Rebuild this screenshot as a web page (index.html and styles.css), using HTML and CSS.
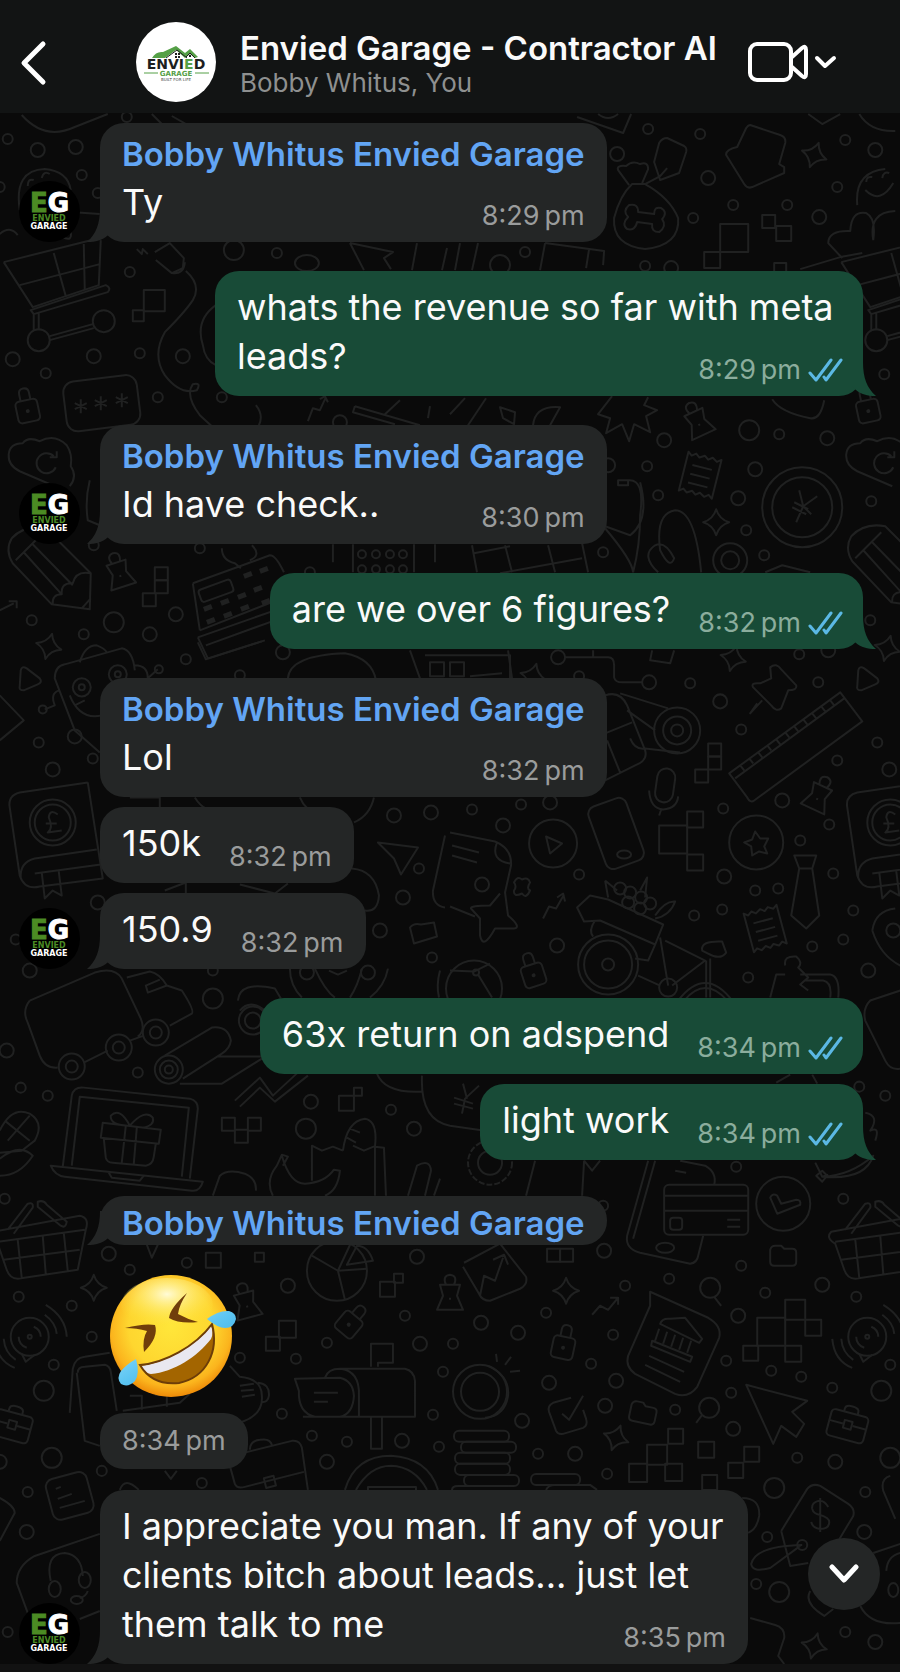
FILE: index.html
```html
<!DOCTYPE html>
<html lang="en">
<head>
    <meta charset="utf-8">
    <meta name="viewport" content="width=device-width, initial-scale=1">
    <title>Envied Garage - Contractor AI</title>
    <link rel="stylesheet" href="styles.css">
</head>
<body>

<!-- shared icons -->
<svg class="sprite" aria-hidden="true">
    <symbol id="eg" viewBox="0 0 61 61">
        <circle cx="30.500" cy="30.500" r="30.500" fill="#000"/>
        <text x="11" y="31" class="eg-big"><tspan fill="#4b8b24" stroke="#4b8b24">E</tspan><tspan fill="#fff" stroke="#fff">G</tspan></text>
        <text x="30" y="40" class="eg-small" fill="#4b8b24">ENVIED</text>
        <text x="30" y="48" class="eg-small" fill="#fff">GARAGE</text>
    </symbol>
    <symbol id="ticks" viewBox="0 0 36 24">
        <path d="M2 15 L8 22 L23 2 M16 19 L18 22 L33 2" fill="none" stroke="#5bb8e4" stroke-width="3" stroke-linecap="round" stroke-linejoin="round"/>
    </symbol>
    <symbol id="spark" viewBox="-14 -14 28 28" overflow="visible">
        <path d="M0 -13 Q3 -3 13 0 Q3 3 0 13 Q-3 3 -13 0 Q-3 -3 0 -13 Z"/>
    </symbol>
    <symbol id="lock" viewBox="-14 -20 28 40" overflow="visible">
        <rect x="-11" y="-6" width="22" height="22" rx="4"/>
        <path d="M-5 -6 V-13 Q-5 -18 0 -18 Q5 -18 5 -13 V-6"/><circle r="1" cy="5"/>
    </symbol>
    <symbol id="pin" viewBox="-16 -20 32 40" overflow="visible">
        <path d="M-4 -9 Q-8 -18 0 -19 Q8 -18 4 -9 M-10 -9 H10 L7 2 L13 16 H-13 L-7 2 Z M0 4 V6"/>
    </symbol>
    <symbol id="receipt" viewBox="-20 -24 40 48" overflow="visible">
        <path d="M-17 -20 l4 3 l4 -3 l4 3 l5 -3 l4 3 l4 -3 l5 3 l4 -3 V20 l-4 -3 l-4 3 l-5 -3 l-4 3 l-4 -3 l-5 3 l-4 -3 l-4 3 Z M-10 -8 H10 M-10 1 H10 M-10 10 H10"/>
    </symbol>
    <symbol id="cart" viewBox="0 0 120 120" overflow="visible">
        <path d="M4 22 L33 67 L99 45 L101 0 M4 22 L100 -2 M20 45 L100 24 M54 13 L66 56 M84 4 L85 50 M31 70 L106 45 Q112 48 108 52 L34 74 Z M34 73 V90 M39 72 V90 M50 96 L93 84 M50 100 L94 88"/>
        <circle cx="39" cy="100" r="11"/><circle cx="104" cy="81" r="11"/>
    </symbol>
    <symbol id="cloud" viewBox="0 0 80 60" overflow="visible">
        <path d="M55 52 L20 37 Q8 31 9 20 Q10 9 23 9 Q28 2 40 7 Q55 -1 67 11 Q73 20 71 32 Q78 42 70 52 M54 22 A10 10 0 1 0 56 33 M57 17 V23 H50"/>
    </symbol>
    <symbol id="pencil" viewBox="0 0 90 90" overflow="visible">
        <path d="M12 10 Q5 22 13 35 L52 76 L90 81 L91 45 L46 0 Q25 -4 12 10 M16 32 L42 6 M24 24 L62 66 M32 15 L73 57 M53 76 Q52 66 62 66 Q61 54 73 55 Q76 42 91 45 M82 80 L91 70"/>
    </symbol>
    <symbol id="book" viewBox="0 0 100 120" overflow="visible">
        <path d="M88 2 L20 12 Q8 15 10 27 L20 95 Q25 110 40 106 L103 98 L88 2 M97 69 L35 78 Q20 82 21 97 M35 93 L101 84 M42 92 L45 118 L53 110 L62 115 L59 91"/>
        <circle cx="53" cy="42" r="23"/><circle cx="53" cy="42" r="18"/>
        <path d="M58 34 Q50 28 49 37 Q54 48 48 52 L62 50 M46 43 H57"/>
    </symbol>
    <symbol id="basket" viewBox="0 0 110 80" overflow="visible">
        <path d="M4 30 L90 14 Q100 16 96 28 L88 68 L28 77 Q20 77 17 68 L8 42 Q-2 36 4 30 Z M8 40 L95 28 M14 58 L90 48 M28 38 L32 76 M53 34 L56 72 M74 31 L78 69 M18 28 L38 2 Q44 0 43 6 L24 32 M48 0 Q54 -2 57 3 L77 20 Q76 27 71 24 L48 5 Z"/>
    </symbol>
    <symbol id="wifi" viewBox="-40 -40 80 80" overflow="visible">
        <circle r="19"/><circle r="2"/>
        <path d="M-8 17 L-4 25 L5 18 M-11 0 A11 11 0 0 0 -3 11 M4 -10 A11 11 0 0 1 11 0 M16 -32 Q36 -20 37 0 M15 -22 Q26 -14 27 -3 M-26 2 Q-25 16 -14 23 M-35 2 Q-33 24 -15 31"/>
    </symbol>
    <symbol id="case" viewBox="-22 -20 44 40" overflow="visible">
        <rect x="-19" y="-10" width="38" height="27" rx="4"/>
        <path d="M-7 -10 V-13 Q-7 -17 0 -17 Q7 -17 7 -13 V-10 M-19 2 H-5 M5 2 H19"/><rect x="-4" y="-2" width="8" height="8"/>
    </symbol>
    <symbol id="folder" viewBox="-14 -12 28 24" overflow="visible">
        <path d="M-13 -6 Q-12 -10 -8 -10 H-2 L1 -7 H9 Q13 -7 13 -3 V6 Q13 10 9 10 H-9 Q-13 10 -13 6 Z"/>
    </symbol>
</svg>

<main class="phone">

    <header class="top">
        <button class="back" type="button" aria-label="Back">
            <svg width="28" height="46" viewBox="0 0 28 46"><path d="M23 4 L4 23 L23 42" fill="none" stroke="#fff" stroke-width="5" stroke-linecap="round" stroke-linejoin="round"/></svg>
        </button>
        <svg class="group-pic" viewBox="0 0 81 81" role="img" aria-label="Envied Garage logo">
            <circle cx="40" cy="40" r="40" fill="#fff"/>
            <path d="M16 36 Q20 29 27 30 L40 24 L49 31 L54 27 L62 35 L59 36 L54 32 L49 36 L40 28 L29 36 Z" fill="#55a047"/>
            <path d="M30 36 L41 28 L51 36 M50 35 L54 31 L59 36" fill="none" stroke="#1d1f1e" stroke-width="1"/>
            <path d="M39 31 h2 v2 h-2 z M42 31 h2 v2 h-2 z M39 34 h2 v2 h-2 z M42 34 h2 v2 h-2 z M53 33 h2 v2 h-2 z" fill="#1d1f1e"/>
            <text x="40" y="47" class="logo-name">ENVI<tspan fill="#55a047">E</tspan>D</text>
            <path d="M8 51 H22 M59 51 H73" stroke="#55a047"/>
            <text x="40" y="54" class="logo-sub">GARAGE</text>
            <text x="40" y="59" class="logo-tag">BUILT FOR LIFE</text>
        </svg>
        <div class="group">
            <h1>Envied Garage - Contractor AI</h1>
            <p>Bobby Whitus, You</p>
        </div>
        <button class="call" type="button" aria-label="Video call">
            <svg width="90" height="42" viewBox="0 0 90 42" fill="none" stroke="#fff" stroke-linejoin="round" stroke-linecap="round">
                <rect x="2" y="2" width="41" height="36" rx="7" stroke-width="4"/>
                <path d="M44 15 L54 6 Q58 3 58 8 V32 Q58 37 54 34 L44 25" stroke-width="4"/>
                <path d="M69 16 L77 24 L86 16" stroke-width="4"/>
            </svg>
        </button>
    </header>

    <section class="chat">
        <svg class="wallpaper" viewBox="0 113 900 1550" preserveAspectRatio="xMidYMin slice" aria-hidden="true">
            <g id="dots"></g>
            <g id="squares"></g>
            <g id="shapes"></g>
            <path d="M22 115 Q45 141 75 127 L108 114 M152 114 L166 128 M172 116 L188 125 M20 210 Q14 170 45 169 Q68 171 71 190 M28 186 q0 -8 6 -6 M42 178 q2 -8 8 -4 M71 212 L100 214 M60 235 Q75 245 70 228 M0 234 Q10 225 18 235"/>
            <path d="M577 117 L623 133 L631 114 M598 114 Q608 122 618 114 M808 114 L822 124 L840 114 M859 114 Q870 132 895 131"/>
            <path d="M750 125 L780 135 Q786 137 785 143 L779 164 L784 167 V173 L752 187 Q747 189 744 184 L726 155 Q725 150 737 147 L746 128 Q748 125 750 125 Z"/>
            <path d="M667 138 L684 146 Q687 148 686 152 L679 173 L660 180 L654 162 L659 143 Q662 138 667 138 Z M645 184 L660 176 L667 168"/>
            <path d="M645 184 Q670 198 678 218 Q680 245 645 249 Q612 245 614 218 Q620 195 632 184 Z M629 185 L618 170 Q616 165 626 166 Q632 160 640 164 Q648 161 648 169 L642 183"/>
            <path d="M638 212 L654 214 Q654 206 661 208 Q668 212 662 219 Q667 226 659 232 Q651 232 652 224 L637 222 Q635 231 627 229 Q621 224 628 217 Q622 211 629 205 Q638 203 638 212 Z"/>
            <path d="M857 205 Q854 172 885 169 M865 190 Q880 205 893 183 M866 182 q0 -6 6 -5 M882 178 q1 -7 7 -5 M842 258 L828 243 Q828 230 850 231 Q851 210 866 213 Q876 218 873 240 M873 240 Q868 212 895 211"/>
            <path d="M800 269 L840 257 L862 253"/>
            <path d="M155 252 L170 243 L184 258 L183 268 L172 273 L156 260 M172 273 Q184 275 185 262 M137 249 l5 5 l1 -5 l5 5 M186 271 Q202 285 193 300 Q185 312 165 332 Q152 355 165 375 Q180 395 197 390 Q202 382 193 384 Q185 395 200 415 L212 426"/>
            <path d="M350 243 L393 252 L384 258 L391 269 M350 243 L364 270 M417 243 L412 270 M447 248 L442 270 M460 243 L455 270 M478 243 L472 270 M545 243 L540 270 M545 243 L604 251 L603 265 M589 249 L586 268 M216 305 Q195 320 203 345 Q205 360 216 365"/>
            <ellipse cx="307" cy="263" rx="12" ry="8"/>
            <rect x="65" y="378" width="74" height="50" rx="11" transform="rotate(-7 102 403)"/>
            <path d="M81 399 V413 M75 403 L87 409 M75 409 L87 403 M101 396 V410 M95 400 L107 406 M95 406 L107 400 M122 393 V407 M116 397 L128 403 M116 403 L128 397"/>
            <path d="M308 421 L313 408 L320 410 L326 397 M320 399 L325 396 L328 402 M355 406 L420 425 M355 406 L353 412 L395 424 M400 400 L385 414 M430 406 L428 418 M256 405 Q264 415 259 425 M90 480 Q85 500 88 520 L100 525"/>
            <path d="M612 396 L598 414 L610 418 L606 433 L622 424 L629 441 L634 424 L650 432 L646 416 L657 410 L644 405 L648 397 M533 425 Q535 405 560 407 L550 425 M500 407 L515 412 L514 424 L503 418 Z M465 398 L450 414 M486 398 L468 425"/>
            <circle cx="802" cy="507" r="40"/><circle cx="802" cy="507" r="30"/>
            <path d="M799 490 L803 506 L796 522 M817 496 L803 506 L811 514 M794 502 L808 509 M792 507 L806 514 M772 399 Q780 412 810 418 Q820 420 824 400"/>
            <path d="M640 482 Q650 520 630 535 L605 526 M605 528 Q632 560 633 572 M628 480 Q645 478 640 515 Q640 545 633 572 M618 480 h10 v5 h-10 z"/>
            <path d="M658 572 Q640 555 655 545 Q665 540 674 558 Q670 570 660 550 Q655 513 675 510 Q695 510 701 572 M765 572 L782 565 L810 572"/>
            <circle cx="730" cy="560" r="17"/><circle cx="730" cy="560" r="9"/>
            <path d="M472 545 L477 572 M505 545 L512 572 M548 545 L555 572 M582 543 L588 572 M474 553 L510 546 M500 573 L582 558"/>
            <path d="M222 548 Q222 560 235 563 L241 568 M252 545 Q262 555 250 560 M193 583 L270 555 Q276 555 284 572 M193 583 L200 630 M200 630 L282 598 M198 637 L275 610 M198 637 L208 658 M206 645 L275 620 M208 658 L265 640"/>
            <rect x="199" y="584" width="34" height="13" rx="3" transform="rotate(-20 216 590)"/>
            <path d="M244 576 l8 -3 M260 571 l8 -3 M204 609 l8 -3 M221 603 l8 -3 M238 597 l8 -3 M254 590 l8 -3 M207 622 l8 -3 M224 616 l8 -3 M241 609 l8 -3 M262 603 l8 -3" stroke-width="5"/>
            <path d="M333 544 V562 M353 544 V572 M414 544 V572 M435 544 V562 M0 610 L14 603 M9 601 h8 v7"/>
            <circle cx="362" cy="554" r="4"/><circle cx="376" cy="554" r="4"/><circle cx="390" cy="554" r="4"/><circle cx="403" cy="554" r="4"/>
            <circle cx="362" cy="569" r="4"/><circle cx="376" cy="569" r="4"/><circle cx="390" cy="569" r="4"/><circle cx="403" cy="569" r="4"/>
            <path d="M100 752 L75 730 L55 678 Q55 666 65 664 L122 648 Q133 650 135 670 M80 662 Q85 645 97 645 Q105 648 107 652 M135 665 Q148 665 148 678 L158 669 M45 709 L55 705 Q50 692 60 690 M70 695 Q80 720 102 715 M75 705 L85 700"/>
            <circle cx="82" cy="687" r="9"/><circle cx="82" cy="687" r="3"/><circle cx="118" cy="674" r="9"/><circle cx="118" cy="674" r="3"/><circle cx="159" cy="669" r="4"/><circle cx="43" cy="709" r="4"/>
            <path d="M21 670 Q22 665 27 668 L40 678 Q43 682 38 684 L24 690 Q19 690 20 686 Z M858 670 Q859 665 864 668 L877 678 Q880 682 875 684 L861 690 Q856 690 857 686 Z M0 695 L24 720 L0 740"/>
            <path d="M198 642 L206 659 L262 641 M288 678 Q290 655 345 653 Q372 658 376 680 M410 650 L420 678 M425 655 H510 V678"/>
            <rect x="430" y="662" width="14" height="14"/><rect x="450" y="662" width="14" height="14"/>
            <path d="M470 676 L502 673 M508 650 L512 678 M565 657 H608 Q614 657 614 665 V677 Q615 682 622 682 H642 M593 650 V656 M652 650 L650 660 L670 663 L674 650"/>
            <path d="M770 667 Q776 662 781 669 L796 685 Q797 690 788 690 L781 708 Q776 712 771 705 L753 687 Q750 682 760 683 L771 678 Z M762 700 L750 713 L757 703"/>
            <path d="M729 773 L840 692 L862 721 L754 800 Q750 803 747 797 Z M735 778 L844 698 M740 765 l4 5 M749 758 l4 5 M758 752 l4 5 M767 745 l4 5 M776 739 l4 5 M785 732 l4 5 M794 726 l4 5 M803 719 l4 5 M812 713 l4 5 M821 706 l4 5 M830 700 l4 5"/>
            <circle cx="677" cy="730" r="23"/><circle cx="677" cy="730" r="14"/><circle cx="677" cy="730" r="6"/>
            <path d="M605 695 Q620 690 627 705 L645 750 Q648 760 635 765 L605 780 M620 693 L668 708 M627 710 L655 730 M605 733 L632 722 M630 738 Q635 750 645 748 L680 752 M607 740 L620 772"/>
            <rect x="656" y="768" width="18" height="34" rx="9" transform="rotate(8 665 785)"/>
            <path d="M649 790 Q650 808 663 809 Q677 808 678 796 M661 809 L659 815"/>
            <rect x="596" y="800" width="40" height="66" rx="8" transform="rotate(-20 616 833)"/><ellipse cx="624" cy="854" rx="7" ry="4"/>
            <path d="M378 842 L418 847 L401 874 L394 858 Z M445 835 L433 890 Q432 905 445 907 M130 797 H160 V808 M195 797 Q200 805 206 808 M300 797 Q305 810 320 815 M374 797 Q370 815 354 822 M165 890 L186 882 V893 M240 884 L275 893 L288 883 M352 868 Q375 870 379 895 Q378 912 365 910"/>
            <circle cx="553" cy="843" r="24"/><path d="M546 836 L562 843 L550 853 Z"/>
            <path d="M450 832 L495 841 Q512 848 511 865 L505 892 L508 915 Q522 927 514 928 L495 928 Q483 950 480 935 L480 918 L471 908 Q470 905 490 905 L500 893 M497 842 Q490 860 510 863 M452 845 L479 852 M452 855 L477 862 M450 906 L475 916"/>
            <path d="M522 879 q6 -3 8 3 q-4 6 0 8 q-4 9 -8 3 q-9 4 -8 -3 q3 -4 0 -8 q3 -7 8 -3 Z M543 918 L549 906 L556 908 L564 894 M557 897 L563 893 L565 901 M410 927 Q414 922 421 924 L434 922 L437 936 L414 943 Z"/>
            <circle cx="756" cy="842" r="27"/><path d="M755 831 L760 838 L768 838 L764 846 L767 853 L759 851 L752 855 L751 846 L744 842 L752 839 Z"/>
            <path d="M794 855 H816 L812 868 H799 Z M799 868 L791 915 L806 928 L819 915 L812 868"/>
            <circle cx="608" cy="964" r="30"/><circle cx="608" cy="964" r="24"/><circle cx="608" cy="964" r="6"/>
            <path d="M577 907 L590 895 L608 899 L663 924 L655 944 L600 920 L584 921 Z M595 920 Q588 930 593 936 M605 880 L608 897 M605 880 L617 890 M640 890 L647 877 L645 897 M655 915 Q665 900 675 901 Q670 915 655 918 M655 944 L648 960 L635 958 M660 937 L668 985 M665 940 L705 960 L672 985 M706 960 V997 M710 958 V997 M638 975 L660 985 M702 950 Q700 940 722 941 L726 952 Q720 960 708 953 Z"/>
            <circle cx="620" cy="888" r="6"/><circle cx="630" cy="892" r="6"/><circle cx="641" cy="897" r="6"/><circle cx="628" cy="902" r="6"/><circle cx="650" cy="903" r="6"/><circle cx="640" cy="908" r="6"/><circle cx="668" cy="987" r="9"/>
            <path d="M678 1000 Q705 965 732 1000 M684 1000 Q705 975 727 1000 M770 997 L776 974 H785 M800 974 H830 Q840 976 838 997 M805 980 H823 Q832 982 830 997 M785 965 Q783 955 796 956 Q803 962 798 967 L808 977 L800 984 L808 990"/>
            <circle cx="474" cy="988" r="28"/><circle cx="476" cy="972" r="3"/><path d="M450 970 L474 971 L490 963 M478 974 L492 997"/>
            <path d="M872 930 Q875 910 895 908 M872 930 Q880 955 900 965 M900 990 L870 1000 Q862 1008 865 1020 L885 1060 Q890 1070 900 1068"/>
            <circle cx="893" cy="930" r="7"/>
            <path d="M30 1000 L95 972 Q115 966 122 978 L141 1018 Q146 1030 138 1036 M30 1000 Q22 1010 28 1022 L40 1055 Q45 1068 58 1067 M84 1062 L108 1050 M130 1040 L144 1035 M127 977 L150 971 Q160 973 167 985 L182 990 Q195 1010 192 1013 L170 1025 M167 985 L148 992 L146 985 L160 979"/>
            <circle cx="156" cy="1032" r="13"/><circle cx="156" cy="1032" r="6"/><circle cx="119" cy="1047" r="13"/><circle cx="119" cy="1047" r="6"/><circle cx="72" cy="1066" r="13"/><circle cx="72" cy="1066" r="6"/>
            <circle cx="169" cy="1069" r="14"/><circle cx="169" cy="1069" r="9"/><circle cx="169" cy="1069" r="4"/>
            <path d="M165 1055 L212 1027 Q228 1025 231 1040 Q230 1048 222 1053 L183 1078 M218 1056 H262 M180 1083 H222 L262 1058 M238 1000 Q240 980 275 988 L281 998 M240 1010 Q250 998 265 1010"/>
            <circle cx="253" cy="1020" r="14"/><circle cx="253" cy="1020" r="8"/>
            <path d="M290 968 Q290 985 302 997 M315 968 Q325 990 335 997 M362 968 Q358 985 350 997 M388 968 Q385 985 370 997 M329 970 L338 974 L347 970 M440 970 Q436 985 439 997"/><circle cx="307" cy="972" r="7"/><circle cx="368" cy="972" r="7"/>
            <path d="M235 1100 L260 1077 L273 1095 L300 1070 M240 1106 L260 1087 L275 1101 L308 1075 M377 1073 Q385 1093 422 1091 M422 1075 Q420 1120 450 1125 M463 1083 L467 1098 M479 1085 L465 1098 L462 1113 M454 1097 L473 1103 M454 1103 L473 1108 M450 1125 L485 1130"/>
            <path d="M63 1166 L72 1095 Q74 1086 84 1087 L190 1098 Q198 1100 198 1108 L190 1178 M72 1165 L80 1096 L189 1107 L182 1176 M51 1165 L203 1181 Q200 1191 192 1190 L65 1176 Q55 1175 51 1165 Z M109 1172 L112 1177 L140 1180 L144 1175"/>
            <path d="M103 1122 L161 1129 L159 1143 L101 1137 Z M104 1138 L106 1157 Q107 1162 113 1162 L146 1165 Q153 1164 154 1156 L156 1143 M126 1125 L122 1162 M137 1127 L134 1163 M130 1125 Q110 1125 111 1115 Q120 1106 130 1125 Q145 1108 153 1117 Q155 1125 143 1127"/>
            <path d="M0 1130 Q12 1105 30 1113 Q45 1122 35 1140 L22 1150 L0 1152 M5 1120 L30 1140 M30 1115 L8 1140 M0 1175 Q20 1175 33 1155 Q20 1142 0 1158"/>
            <path d="M213 1195 L220 1175 Q228 1168 245 1173 Q257 1178 256 1190 M282 1155 Q290 1183 305 1183 Q325 1182 334 1169 L340 1170 Q338 1190 325 1195 M277 1165 L282 1154 L288 1156 L283 1165 M277 1165 Q265 1180 273 1195 M312 1180 V1145 L322 1150 L333 1146 L343 1150 M343 1150 Q347 1120 365 1118 Q378 1120 375 1146 L384 1147 L386 1195 M375 1146 V1195 M353 1145 L364 1150 L376 1145 M350 1128 L360 1132 M347 1137 L356 1142 M408 1195 L417 1165 Q430 1158 431 1170 L425 1195 M434 1195 L440 1178"/>
            <circle cx="490" cy="1162" r="22" stroke-dasharray="6 2"/><circle cx="490" cy="1162" r="12"/>
            <path d="M535 1160 L526 1195 M584 1160 L582 1195 M584 1160 L592 1170 L600 1160 M648 1160 L627 1235 Q625 1248 640 1252 L690 1263 Q697 1262 698 1255 L703 1235 M655 1160 L633 1238 M680 1160 L705 1165 Q717 1172 714 1184 M675 1170 L686 1172"/>
            <rect x="664" y="1184" width="84" height="50" rx="5"/><path d="M664 1195 H748 M664 1210 H748 M727 1219 H740 M727 1226 H740"/><rect x="670" y="1217" width="12" height="12" rx="3"/><ellipse cx="665" cy="1247" rx="9" ry="5"/>
            <circle cx="783" cy="1203" r="27"/><path d="M770 1197 q2 -5 7 -2 l4 8 l15 -4 q5 0 4 5 l-23 9 Z"/>
            <path d="M815 1162 L822 1176 L828 1174 M822 1176 Q865 1180 873 1155 Q850 1175 822 1176 M816 1175 l6 6 l5 -6 l-5 -5 Z M865 1112 Q880 1115 870 1130 Q880 1125 875 1140 M776 1082 L790 1074 M812 1074 L817 1083"/>
            <circle cx="337" cy="1270" r="30"/><path d="M338 1270 L352 1240 M338 1270 L367 1268 M338 1270 L345 1299 M338 1270 L312 1255 M347 1264 L357 1245 Q368 1245 373 1260 Z M147 1244 L152 1257 L158 1244"/>
            <path d="M464 1262 L500 1243 L526 1276 Q528 1284 520 1288 L490 1300 Q482 1300 479 1293 L463 1266 M480 1295 L484 1275 L495 1280 L503 1257 M493 1259 L504 1254 L508 1264 M592 1314 L600 1305 L608 1309 L618 1297 M610 1297 H618 V1304"/>
            <path d="M650 1291 L708 1317 Q722 1325 719 1337 L697 1386 Q688 1398 675 1393 L635 1373 Q625 1366 628 1355 L650 1305 Z M660 1323 Q662 1317 670 1318 L685 1317 L702 1338 L699 1342 Z M652 1340 L692 1356 L690 1361 L651 1345 Z M659 1328 l-4 12 M667 1331 l-4 12 M675 1334 l-4 12 M683 1337 l-4 12 M691 1340 l-4 12 M649 1355 L684 1371 M645 1364 L680 1381"/>
            <circle cx="710" cy="1287" r="10"/><path d="M714 1296 L721 1305"/><circle cx="709" cy="1407" r="10"/><path d="M702 1414 L696 1422"/>
            <path d="M746 1384 L807 1400 L792 1411 L804 1423 L796 1436 L781 1425 L773 1443 Z"/>
            <circle cx="480" cy="1391" r="27"/><circle cx="480" cy="1391" r="19"/><path d="M488 1365 Q510 1375 508 1395 Q505 1415 485 1417 M496 1353 L497 1361 M511 1356 L505 1364 M510 1371 L520 1370"/>
            <path d="M571 1397 L553 1402 Q547 1405 549 1411 L556 1430 Q558 1434 563 1433 L583 1427 Q588 1425 586 1418 L583 1409 M562 1413 L569 1419 L583 1395"/>
            <path d="M70 1412 L73 1368 Q75 1357 85 1356 L110 1352 M78 1372 Q78 1366 85 1366 L105 1364 Q110 1365 111 1371 L117 1410 M77 1372 L85 1440 L100 1445 M123 1410 L180 1402 L190 1393 M130 1395 h12 v14 M155 1394 h12 v12 M175 1392 h12 M230 1365 L240 1376 Q262 1378 262 1395 Q264 1420 225 1425 M240 1385 L254 1383 M241 1390 L254 1389 M242 1396 L255 1394 M258 1382 Q270 1383 269 1395 Q268 1402 262 1401"/>
            <path d="M295 1378 L340 1377 Q353 1380 354 1395 Q353 1413 340 1416 H315 Q298 1412 299 1390 Z M325 1377 Q328 1368 340 1368 H405 Q414 1370 415 1380 V1416 H303 M340 1368 Q360 1370 359 1395 V1416 M371 1366 V1343 H393 V1362 H378 V1366 M314 1392 H338 M314 1401 H328 M371 1417 V1448 H382 V1417"/>
            <path d="M230 1465 L235 1483 Q237 1488 245 1486 L304 1471 M240 1453 L292 1440 Q300 1439 302 1447 L308 1489 M250 1449 Q250 1440 260 1439 Q270 1437 272 1444 M165 1470 L171 1478 L177 1470 M120 1489 Q125 1475 139 1489"/><rect x="265" y="1476" width="10" height="10" transform="rotate(-14 270 1481)"/>
            <path d="M345 1489 Q355 1455 391 1455 Q428 1457 438 1489 M356 1489 Q370 1465 391 1465 Q415 1466 427 1489 M368 1489 V1486 H416 V1489"/>
            <rect x="454" y="1430" width="55" height="11" rx="5"/><rect x="461" y="1441" width="55" height="11" rx="5"/><rect x="455" y="1452" width="55" height="11" rx="5"/><rect x="455" y="1463" width="55" height="11" rx="5"/><rect x="464" y="1474" width="55" height="11" rx="5"/><rect x="531" y="1473" width="49" height="11" rx="5"/><path d="M452 1489 Q452 1485 458 1485 H508 M546 1489 Q548 1484 555 1484 H590 L597 1489"/>
            <rect x="49" y="1474" width="42" height="42" rx="8" transform="rotate(-15 70 1495)"/><path d="M56 1488 L61 1486 M58 1498 L72 1493 M60 1507 L85 1500"/>
            <path d="M0 1497 Q15 1505 15 1512 L0 1540 M100 1533 L35 1555 Q17 1565 17 1582 L28 1612 M100 1610 L80 1618 M51 1580 Q45 1553 65 1552 Q82 1554 83 1575 M88 1590 Q86 1596 80 1597"/><ellipse cx="55" cy="1588" rx="6" ry="8"/><ellipse cx="85" cy="1579" rx="6" ry="8"/><ellipse cx="77" cy="1599" rx="6" ry="4"/>
            <path d="M781 1530 L807 1488 Q812 1482 820 1485 L848 1503 Q855 1508 853 1515 L838 1540 M781 1530 L790 1565 L808 1562 M802 1544 Q755 1545 751 1563 Q752 1572 770 1567 L800 1545 M828 1506 Q824 1499 818 1500 Q811 1502 812 1508 Q813 1513 820 1514 Q829 1517 829 1521 Q829 1528 820 1528 Q812 1527 811 1521 M820 1497 V1531"/><circle cx="802" cy="1544" r="5"/>
            <path d="M742 1497 Q760 1497 759 1515 Q757 1528 748 1532 M750 1617 L775 1624 Q785 1627 784 1637 L778 1655 L784 1663 M873 1552 L900 1543 M860 1605 Q870 1625 900 1622 M810 1590 Q803 1602 824 1615 L833 1608 M890 1475 Q880 1478 883 1490 L895 1518 M886 1570 Q887 1555 900 1552"/><ellipse cx="893" cy="1589" rx="5" ry="7"/>
        </svg>

        <ol class="messages">
            <li class="row in">
                <svg class="avatar"><use href="#eg"/></svg>
                <div class="bubble tail">
                    <h2>Bobby Whitus Envied Garage</h2>
                    <div class="line"><p>Ty</p><time>8:29&thinsp;pm</time></div>
                </div>
            </li>
            <li class="row out">
                <div class="bubble tail">
                    <div class="line long"><p>whats the revenue so far with meta leads?</p><time>8:29&thinsp;pm<svg class="ticks"><use href="#ticks"/></svg></time></div>
                </div>
            </li>
            <li class="row in">
                <svg class="avatar"><use href="#eg"/></svg>
                <div class="bubble tail">
                    <h2>Bobby Whitus Envied Garage</h2>
                    <div class="line"><p>Id have check..</p><time>8:30&thinsp;pm</time></div>
                </div>
            </li>
            <li class="row out">
                <div class="bubble tail">
                    <div class="line"><p>are we over 6 figures?</p><time>8:32&thinsp;pm<svg class="ticks"><use href="#ticks"/></svg></time></div>
                </div>
            </li>
            <li class="row in">
                <div class="bubble">
                    <h2>Bobby Whitus Envied Garage</h2>
                    <div class="line"><p>Lol</p><time>8:32&thinsp;pm</time></div>
                </div>
            </li>
            <li class="row in next">
                <div class="bubble">
                    <div class="line"><p>150k</p><time>8:32&thinsp;pm</time></div>
                </div>
            </li>
            <li class="row in next">
                <svg class="avatar"><use href="#eg"/></svg>
                <div class="bubble tail">
                    <div class="line"><p>150.9</p><time>8:32&thinsp;pm</time></div>
                </div>
            </li>
            <li class="row out">
                <div class="bubble">
                    <div class="line"><p>63x return on adspend</p><time>8:34&thinsp;pm<svg class="ticks"><use href="#ticks"/></svg></time></div>
                </div>
            </li>
            <li class="row out next">
                <div class="bubble tail">
                    <div class="line"><p>light work</p><time>8:34&thinsp;pm<svg class="ticks"><use href="#ticks"/></svg></time></div>
                </div>
            </li>
            <li class="row in sticker">
                <div class="bubble tail only-name">
                    <h2>Bobby Whitus Envied Garage</h2>
                </div>
                <svg class="emoji" viewBox="0 0 128 124" role="img" aria-label="Rolling on the floor laughing">
                    <defs>
                        <radialGradient id="face" cx="50%" cy="42%" r="58%">
                            <stop offset="0" stop-color="#ffe63a"/><stop offset=".6" stop-color="#fed62f"/><stop offset=".85" stop-color="#fbb41d"/><stop offset="1" stop-color="#ee8a08"/>
                        </radialGradient>
                        <radialGradient id="shine" cx="50%" cy="30%" r="60%">
                            <stop offset="0" stop-color="#fffbd6"/><stop offset="1" stop-color="#ffe53a" stop-opacity="0"/>
                        </radialGradient>
                        <linearGradient id="tear" x1="0" y1="0" x2="1" y2="1">
                            <stop offset="0" stop-color="#b9ecff"/><stop offset=".5" stop-color="#5cc5f2"/><stop offset="1" stop-color="#2496d8"/>
                        </linearGradient>
                    </defs>
                    <circle cx="62" cy="61" r="61" fill="url(#face)"/>
                    <ellipse cx="58" cy="30" rx="46" ry="27" fill="url(#shine)"/>
                    <path d="M31 90 C55 88 86 72 103 49 C110 76 98 102 70 108 C50 110 38 102 31 90 Z" fill="#a36500"/>
                    <path d="M32 91 C55 88 86 72 102 51 Q105 57 102 64 C88 82 65 97 42 99 Q34 98 32 91 Z" fill="#e9e8f0"/>
                    <path d="M31 90 C55 88 86 72 103 49 C110 76 98 102 70 108 C50 110 38 102 31 90 Z" fill="none" stroke="#6d3d08" stroke-width="2"/>
                    <path d="M16 53 Q36 48 46 50 Q50 62 35 77 Q33 64 38 56 Q28 53 16 53 Z M78 18 Q61 33 60 43 Q70 49 89 47 Q78 44 69 39 Q70 30 78 18 Z" fill="#703e0b"/>
                    <path d="M98 44 Q110 35 120 36 Q127 38 127 44 Q125 53 116 53 Q109 53 98 44 Z M27 84 Q31 98 26 106 Q19 113 12 109 Q7 103 12 96 Q18 89 27 84 Z" fill="url(#tear)"/>
                </svg>
                <div class="bubble stamp"><time>8:34&thinsp;pm</time></div>
            </li>
            <li class="row in last">
                <svg class="avatar"><use href="#eg"/></svg>
                <div class="bubble tail">
                    <div class="line long"><p>I appreciate you man. If any of your clients bitch about leads... just let them talk to me</p><time>8:35&thinsp;pm</time></div>
                </div>
            </li>
        </ol>

        <button class="to-bottom" type="button" aria-label="Scroll to latest">
            <svg width="32" height="20" viewBox="0 0 32 20"><path d="M4 3 L16 16 L28 3" fill="none" stroke="#fff" stroke-width="5" stroke-linecap="round" stroke-linejoin="round"/></svg>
        </button>
    </section>

    <footer class="bottom"></footer>
</main>

<script src="wallpaper.js"></script>
</body>
</html>
```
FILE: styles.css
```css
* {
    box-sizing: border-box;
}
body {
    margin: 0;
    background: #0a0a0a;
    color: #fafafa;
    font-family: Inter, "Liberation Sans", sans-serif;
}
h1, h2, p, ol {
    margin: 0;
    padding: 0;
}
button {
    border: 0;
    padding: 0;
    background: none;
    cursor: pointer;
}
button svg {
    display: block;
}
.sprite {
    display: none;
}

/* header */
.top {
    display: flex;
    align-items: center;
    height: 113px;
    padding: 12px 62px 0 20px;
    background: #121414;
}
.back {
    margin-right: 88px;
}
.group-pic {
    flex: none;
    width: 81px;
    height: 81px;
    margin-right: 23px;
}
.logo-name, .logo-sub, .logo-tag, .eg-small {
    text-anchor: middle;
}
.logo-name {
    font: bold 14px "DejaVu Sans", sans-serif;
    fill: #1d1f1e;
}
.logo-sub {
    font: bold 7px "DejaVu Sans", sans-serif;
    fill: #55a047;
}
.logo-tag {
    font: 4px "DejaVu Sans", sans-serif;
    fill: #444;
}
.group {
    flex: 1;
    padding-top: 3px;
    white-space: nowrap;
}
.group h1 {
    font-size: 33px;
    line-height: 38px;
    font-weight: 600;
}
.group p {
    font-size: 26px;
    line-height: 32px;
    color: #8e9090;
}

/* chat */
.chat {
    position: relative;
    padding: 10px 0 0;
    overflow: hidden;
}
.wallpaper {
    position: absolute;
    top: 0;
    left: 0;
    width: 100%;
    height: 100%;
    fill: none;
    stroke: #202121;
    stroke-width: 2;
    stroke-linejoin: round;
}
.messages {
    position: relative;
    list-style: none;
}
.row {
    display: flex;
    align-items: flex-end;
    margin-top: 29px;
}
.row:first-child {
    margin-top: 0;
}
.row.next {
    margin-top: 10px;
}
.in {
    padding-left: 100px;
}
.out {
    justify-content: flex-end;
    padding-right: 37px;
}
.avatar {
    flex: none;
    width: 61px;
    height: 61px;
    margin-left: -81px;
    margin-right: 20px;
}
.eg-big {
    font: bold 26px "DejaVu Sans", sans-serif;
}
.eg-small {
    font: bold 8px "DejaVu Sans", sans-serif;
}
.bubble {
    position: relative;
    max-width: 648px;
    padding: 12px 22px 10px;
    border-radius: 24px;
    background: #242626;
}
.out .bubble {
    padding-right: 19px;
    background: #184b37;
}
.tail::before {
    content: "";
    position: absolute;
    left: -13px;
    bottom: 0;
    width: 24px;
    height: 34px;
    background: inherit;
    clip-path: path("M13 0 C13 16 9 26 0 34 C9 34 15 32 20 28 L24 24 L24 0 Z");
}
.out .tail::before {
    left: auto;
    right: -13px;
    transform: scaleX(-1);
}
.bubble h2 {
    margin-bottom: 4px;
    font-size: 33px;
    line-height: 39px;
    font-weight: 600;
    color: #62a5f4;
    white-space: nowrap;
}
.line {
    display: flex;
    justify-content: space-between;
    align-items: flex-end;
    gap: 28px;
}
.line p {
    padding-bottom: 5px;
    font-size: 36px;
    line-height: 49px;
}
time {
    display: flex;
    align-items: center;
    font-size: 27px;
    line-height: 32px;
    color: #9a9c9c;
    white-space: nowrap;
}
.out time {
    color: #8bad9d;
}
/* long texts: the time floats up beside the last line */
.line.long {
    display: flow-root;
    font-size: 36px;
    line-height: 49px;
}
.long p {
    display: inline;
}
.long time {
    float: right;
    margin-top: 22px;
    line-height: 32px;
}
.ticks {
    width: 36px;
    height: 24px;
    margin-left: 7px;
}

/* big emoji message */
.sticker {
    flex-direction: column;
    align-items: flex-start;
    margin-top: 36px;
}
.only-name {
    padding: 8px 22px 2px;
}
.only-name h2 {
    margin: 0;
}
.emoji {
    width: 128px;
    height: 124px;
    margin: 30px 0 14px 9px;
}
.stamp {
    padding: 12px 22px;
}
.last {
    margin-top: 21px;
}

.to-bottom {
    position: absolute;
    right: 20px;
    bottom: 54px;
    display: flex;
    align-items: center;
    justify-content: center;
    width: 72px;
    height: 72px;
    border-radius: 50%;
    background: #242626;
}
.bottom {
    height: 9px;
    background: #121212;
}
```
FILE: wallpaper.js
```js
// small doodles of the chat wallpaper
var rings = {
    5: "127,117 8,139 82,175 0,187 98,193 648,129 700,134 845,140 837,187 733,205 787,205 693,218 525,252 645,266 884,374 130,272 277,253 46,373 140,353 158,397 222,397 94,545 200,548 32,620 84,634 186,659 310,572 779,434 647,466 658,495 746,530 764,555 871,501 603,552 870,620 799,654 690,683 818,682 741,729 877,742 837,760 723,808 521,804 472,809 579,676 39,742 93,758 16,939 419,868 432,957 213,970 240,675 579,874 755,890 778,888 800,840 829,824 833,873 694,915 722,909 812,946 843,939 853,910 748,977 859,1086 885,1095 736,1166 843,1198 603,1205 21,1087 48,1095 138,1072 391,1109 5,1198 130,1269 187,1262 19,1296 72,1305 92,1336 54,1364 405,1315 327,1342 240,1357 296,1358 443,1371 282,1413 433,1414 741,1265 856,1296 625,1285 669,1278 546,1312 613,1334 765,1292 591,1363 538,1453 607,1473 675,1409 731,1392 771,1370 801,1376 832,1387 797,1457 865,1491 767,1536 756,1583 845,1631 453,1343 726,1360 890,1364 102,1470 28,1491 202,1482 312,1435 347,1441 439,1446 8,1631",
    7: "38,150 76,147 617,154 708,178 875,150 819,217 671,268 13,359 94,356 183,356 340,422 176,614 150,634 283,652 664,440 827,438 755,469 738,498 608,465 828,650 649,682 558,657 720,701 889,769 782,800 550,802 53,769 75,736 30,970 98,902 394,815 431,812 403,897 380,930 7,1050 503,825 482,884 557,945 724,876 868,970 311,1101 414,1128 109,1253 288,1285 417,1256 420,1343 604,1250 822,1284 481,1322 518,1332 738,1315 549,1382 616,1380 605,1405 522,1420 575,1453 733,1428 835,1461 864,1531 875,1641 0,1461 27,1531 327,1461 402,1440",
    10: "500,265 234,250 114,622 749,430 213,998 306,1128 44,1390 881,1390 890,1457 774,1487 779,1591 52,1457"
};

// x,y,size
var squares = "720,224,28 704,252,16 762,215,13 776,226,15 774,263,12 144,290,21 133,310,11 155,567,13 155,580,13 143,593,13 708,743,13 708,756,13 695,769,13 659,825,28 687,811,16 687,854,16 222,1117,13 235,1129,13 248,1117,13 339,1095,15 354,1087,8 206,1252,15 255,1252,9 279,1320,17 266,1336,14 380,1281,15 394,1273,9 757,1317,28 785,1299,20 805,1319,16 743,1345,15 785,1345,16 647,1444,20 668,1428,15 629,1463,18 665,1463,17 698,1441,16 728,1462,15 744,1446,15 702,1474,15 547,1248,13 560,1248,13";

// symbol, x, y, width, height, turn
var shapes = [
    ["cart", 0, 240, 120, 120, 0], ["cart", 837, 240, 120, 120, 0],
    ["cloud", 0, 434, 80, 60, 0], ["cloud", 837, 434, 80, 60, 0],
    ["pencil", 0, 528, 90, 90, 0], ["pencil", 839, 526, 90, 90, 0],
    ["book", 0, 780, 100, 120, 0], ["book", 837, 780, 100, 120, 0],
    ["basket", -10, 1201, 110, 80, 0], ["basket", 827, 1201, 110, 80, 0],
    ["wifi", -10, 1296, 80, 80, 0], ["wifi", 827, 1296, 80, 80, 0],
    ["case", -9, 1402, 44, 40, 15], ["case", 826, 1402, 44, 40, 15],
    ["spark", 800, 141, 28, 28, 20], ["spark", 35, 632, 28, 28, 15],
    ["spark", 702, 508, 28, 28, 0], ["spark", 719, 644, 28, 28, 15],
    ["spark", 519, 662, 28, 28, 15], ["spark", 873, 634, 28, 28, 15],
    ["spark", 80, 1273, 28, 28, 0], ["spark", 552, 1276, 28, 28, 0],
    ["spark", 602, 1423, 28, 28, 20], ["spark", 800, 1631, 28, 28, 15],
    ["lock", 13, 386, 28, 40, -12], ["lock", 853, 386, 28, 40, -12],
    ["lock", 518, 950, 28, 40, -18], ["lock", 550, 1322, 28, 40, 12],
    ["lock", 338, 1300, 28, 40, 40],
    ["pin", 103, 551, 32, 40, -18], ["pin", 681, 400, 32, 40, -25],
    ["pin", 803, 774, 32, 40, 25], ["pin", 230, 1281, 32, 40, -15],
    ["pin", 434, 1273, 32, 40, 0],
    ["receipt", 680, 451, 40, 48, 14], ["receipt", 745, 904, 40, 48, -15],
    ["folder", 769, 1243, 28, 24, 0], ["folder", 629, 1400, 28, 24, 12]
];

var NS = "http://www.w3.org/2000/svg";

function add(parent, name, attrs) {
    var el = document.createElementNS(NS, name);
    for (var key in attrs) {
        el.setAttribute(key, attrs[key]);
    }
    document.getElementById(parent).appendChild(el);
}

for (var r in rings) {
    rings[r].split(" ").forEach(function (item) {
        var c = item.split(",");
        add("dots", "circle", { cx: c[0], cy: c[1], r: r });
    });
}

squares.split(" ").forEach(function (item) {
    var s = item.split(",");
    add("squares", "rect", { x: s[0], y: s[1], width: s[2], height: s[2] });
});

shapes.forEach(function (s) {
    var turn = "rotate(" + s[5] + " " + (s[1] + s[3] / 2) + " " + (s[2] + s[4] / 2) + ")";
    add("shapes", "use", { href: "#" + s[0], x: s[1], y: s[2], width: s[3], height: s[4], transform: turn });
});
```
